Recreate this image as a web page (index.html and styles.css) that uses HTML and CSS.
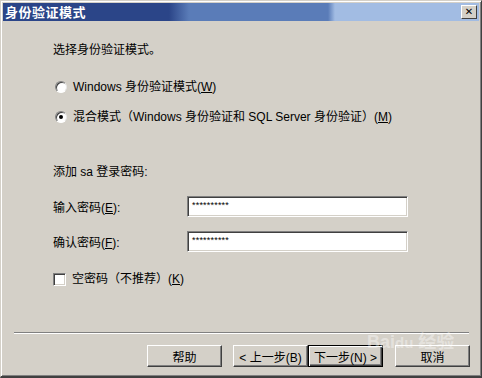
FILE: index.html
```html
<!DOCTYPE html>
<html lang="zh-CN">
  <head>
    <meta charset="UTF-8" />
    <title>身份验证模式</title>
    <link rel="stylesheet" href="styles.css">
  </head>
  <body>
    <div class="window">
      <div class="titlebar">
        <span class="title">身份验证模式</span>
        <span class="close">&#x2715;</span>
      </div>

      <div class="content">
        <div class="row intro">选择身份验证模式。</div>

        <div class="row radio-row first">
          <span class="radio"></span>
          <span>Windows 身份验证模式(<u>W</u>)</span>
        </div>
        <div class="row radio-row second">
          <span class="radio checked"></span>
          <span>混合模式（Windows 身份验证和 SQL Server 身份验证）(<u>M</u>)</span>
        </div>

        <div class="row sa">添加 sa 登录密码:</div>

        <div class="field first-field">
          <label>输入密码(<u>E</u>):</label>
          <div class="input">**********</div>
        </div>
        <div class="field second-field">
          <label>确认密码(<u>F</u>):</label>
          <div class="input">**********</div>
        </div>

        <div class="row check-row">
          <span class="checkbox"></span>
          <span>空密码（不推荐）(<u>K</u>)</span>
        </div>
      </div>

      <div class="footer">
        <div class="separator"></div>
        <div class="buttons">
          <button class="btn help">帮助</button>
          <button class="btn back">&lt; 上一步(B)</button>
          <button class="btn next default">下一步(N) &gt;</button>
          <button class="btn cancel">取消</button>
        </div>
      </div>

      <span class="watermark">Bai<span class="paw">du</span> 经验</span>
    </div>
  </body>
</html>
```

FILE: styles.css
```css
* {
  box-sizing: border-box;
}
body {
  margin: 0;
  padding: 0;
  background: #d4d0c8;
  font-family: "Liberation Sans", "Noto Sans CJK SC", sans-serif;
  font-size: 12px;
  color: #000000;
}
.window {
  position: relative;
  width: 482px;
  height: 378px;
  display: flex;
  flex-direction: column;
  background: #d4d0c8;
  border-top: 1px solid #d4d0c8;
  border-left: 1px solid #d4d0c8;
  border-right: 1px solid #404040;
  border-bottom: 2px solid #404040;
  box-shadow: inset 1px 1px 0 #ffffff, inset -1px -1px 0 #808080;
  padding: 2px 2px 0 2px;
}
.titlebar {
  height: 18px;
  display: flex;
  align-items: center;
  justify-content: space-between;
  padding: 0 2px 0 2px;
  background: linear-gradient(to right, #2b4588 0, #2b4588 166px, #5a7cb8 186px, #5a7cb8 325px, #a2bce3 332px, #a2bce3 100%);
}
.title {
  color: #ffffff;
  font-weight: bold;
  font-size: 13px;
  font-family: "Noto Sans CJK SC", sans-serif;
  line-height: 18px;
  letter-spacing: 0.5px;
}
.close {
  width: 16px;
  height: 14px;
  background: #d4d0c8;
  border-top: 1px solid #ffffff;
  border-left: 1px solid #ffffff;
  border-right: 1px solid #404040;
  border-bottom: 1px solid #404040;
  font-family: "DejaVu Sans", sans-serif;
  font-size: 10px;
  font-weight: bold;
  line-height: 12px;
  text-align: center;
  color: #000000;
}
.content {
  padding-left: 50px;
}
.row {
  height: 16px;
  line-height: 16px;
  display: flex;
  align-items: center;
  white-space: nowrap;
}
.intro {
  margin-top: 21px;
}
.radio-row.first {
  margin-top: 21px;
}
.radio-row.second {
  margin-top: 14px;
}
.radio-row {
  padding-left: 2px;
}
.radio {
  width: 12px;
  height: 12px;
  border-radius: 50%;
  background: #ffffff;
  border: 1px solid;
  border-color: #808080 #e8e8e8 #ffffff #808080;
  box-shadow: inset 1px 1px 0 #404040;
  margin-right: 6px;
  display: flex;
  align-items: center;
  justify-content: center;
}
.radio.checked::after {
  content: "";
  width: 4px;
  height: 4px;
  border-radius: 50%;
  background: #000000;
}
.sa {
  margin-top: 39px;
}
.field {
  height: 21px;
  display: flex;
  align-items: center;
}
.first-field {
  margin-top: 16px;
}
.second-field {
  margin-top: 14px;
}
.field label {
  width: 134px;
}
.input {
  width: 221px;
  height: 21px;
  background: #ffffff;
  border-top: 1px solid #808080;
  border-left: 1px solid #808080;
  border-right: 1px solid #ffffff;
  border-bottom: 1px solid #ffffff;
  box-shadow: inset 1px 1px 0 #404040, inset -1px -1px 0 #d4d0c8;
  font-size: 9px;
  line-height: 14px;
  padding: 1px 0 0 4px;
  letter-spacing: 0.2px;
}
.check-row {
  margin-top: 19px;
}
.checkbox {
  width: 13px;
  height: 13px;
  background: #ffffff;
  border-top: 1px solid #808080;
  border-left: 1px solid #808080;
  border-right: 1px solid #ffffff;
  border-bottom: 1px solid #ffffff;
  box-shadow: inset 1px 1px 0 #404040, inset -1px -1px 0 #d4d0c8;
  margin-right: 6px;
}
.footer {
  margin-top: auto;
  padding-bottom: 9px;
}
.separator {
  margin: 0 10px 0 11px;
  border-top: 1px solid #808080;
  border-bottom: 1px solid #ffffff;
}
.buttons {
  margin-top: 11px;
  display: flex;
  justify-content: flex-end;
  padding-right: 9px;
}
.btn {
  width: 75px;
  height: 22px;
  padding: 0;
  background: #d4d0c8;
  font-family: "Liberation Sans", "Noto Sans CJK SC", sans-serif;
  font-size: 12px;
  color: #000000;
  border-top: 1px solid #ffffff;
  border-left: 1px solid #ffffff;
  border-right: 1px solid #404040;
  border-bottom: 1px solid #404040;
  box-shadow: inset -1px -1px 0 #808080;
}
.help {
  margin-right: 11px;
}
.next {
  margin-right: 12px;
}
.btn.default {
  border: 1px solid #000000;
  box-shadow: inset 1px 1px 0 #ffffff, inset -1px -1px 0 #404040, inset -2px -2px 0 #808080;
}
.watermark {
  position: absolute;
  left: 366px;
  top: 326px;
  font-family: "Liberation Sans", "Noto Sans CJK SC", sans-serif;
  font-size: 18px;
  font-weight: bold;
  color: rgba(255, 255, 255, 0.4);
  pointer-events: none;
  white-space: nowrap;
}
.paw {
  font-size: 15px;
}
```
